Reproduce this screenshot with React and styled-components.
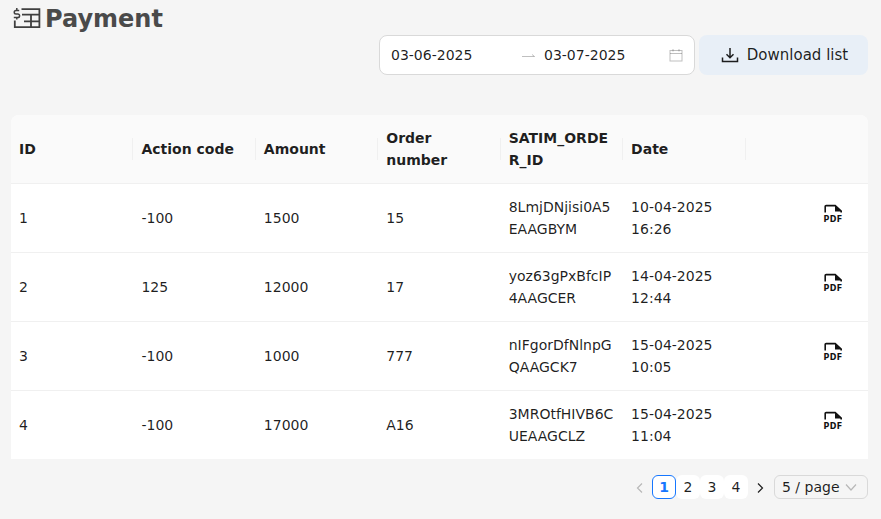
import React from "react";
import styled, { createGlobalStyle } from "styled-components";

const Global = createGlobalStyle`
  html, body { margin: 0; padding: 0; background: #f5f5f5; }
  body { font-family: "DejaVu Sans", sans-serif; font-size: 14px; color: rgba(0,0,0,0.88); }
`;

const Page = styled.div`
  width: 881px; height: 519px; box-sizing: border-box; padding: 0 13px 0 11px; overflow: hidden;
`;
const TitleRow = styled.div`
  display: flex; align-items: center; gap: 4px; height: 35px; padding: 2px 0 0 2px; box-sizing: border-box;
`;
const Title = styled.h1`
  margin: 0; font-size: 24px; line-height: 36px; font-weight: 700; color: #4a4a4a;
`;
const Toolbar = styled.div`
  display: flex; justify-content: flex-end; gap: 4px; height: 40px; margin-bottom: 40px;
`;
const RangePicker = styled.div`
  display: flex; align-items: center; width: 316px; box-sizing: border-box; padding: 0 11px;
  background: #fff; border: 1px solid #d9d9d9; border-radius: 8px;
`;
const DateValue = styled.span`
  width: ${(p) => (p.$end ? "125px" : "131px")}; flex: none; line-height: 22px;
`;
const RangeArrow = styled.span`
  width: 22px; flex: none; display: flex; justify-content: flex-start;
  color: rgba(0,0,0,0.25);
`;
const CalendarSlot = styled.span`
  margin-left: auto; margin-right: 4px; display: flex; color: rgba(0,0,0,0.25);
`;
const DownloadButton = styled.button`
  display: flex; align-items: center; justify-content: center; gap: 8px; width: 169px; padding: 0 0 0 2px;
  border: 0; border-radius: 8px; background: #e8eff7; color: rgba(0,0,0,0.88);
  font: inherit; font-size: 15px; cursor: pointer;
`;
const Table = styled.table`
  width: 857px; table-layout: fixed; border-collapse: separate; border-spacing: 0;
  background: #fff; border-radius: 8px 8px 0 0;
`;
const Head = styled.th`
  position: relative; height: 69px; box-sizing: border-box; padding: 0 8px; text-align: left;
  background: #fafafa; font-weight: 700; line-height: 22px; border-bottom: 1px solid #f0f0f0;
  overflow-wrap: anywhere; color: rgba(0,0,0,0.88);
  &:first-child { border-top-left-radius: 8px; }
  &:last-child { border-top-right-radius: 8px; }
  &:not(:last-child)::before {
    content: ""; position: absolute; top: 50%; right: 0; width: 1px; height: 22px;
    transform: translateY(-50%); background: #f0f0f0;
  }
`;
const Cell = styled.td`
  height: 69px; box-sizing: border-box; padding: 0 8px; line-height: 22px;
  border-bottom: 1px solid #f0f0f0; overflow-wrap: anywhere;
  ${(p) => p.$last && "border-bottom: 0; height: 68px;"}
  ${(p) => p.$icon && "text-align: right; padding-right: 24px;"}
`;
const PdfIcon = styled.svg`
  display: inline-block; vertical-align: middle; width: 22px; height: 22px; margin-bottom: 6px;
`;
const Pager = styled.nav`
  display: flex; justify-content: flex-end; align-items: center; margin-top: 16px; height: 24px;
`;
const PageItem = styled.span`
  width: 24px; height: 24px; box-sizing: border-box; display: flex; align-items: center; justify-content: center;
  border-radius: 6px; line-height: 22px;
  background: ${(p) => (p.$plain ? "transparent" : "#fff")};
  border: 1px solid ${(p) => (p.$active ? "#1677ff" : "transparent")};
  color: ${(p) => (p.$active ? "#1677ff" : p.$disabled ? "rgba(0,0,0,0.25)" : "rgba(0,0,0,0.88)")};
  font-weight: ${(p) => (p.$active ? 700 : 400)};
`;
const PageSize = styled.div`
  display: flex; align-items: center; justify-content: space-between; width: 94px; height: 24px;
  margin-left: 2px; padding: 0 10px 0 7px; box-sizing: border-box;
  background: #f5f5f5; border: 1px solid #d9d9d9; border-radius: 6px;
`;
const Chevron = styled.svg`
  width: 12px; height: 12px; fill: none; stroke: currentColor; stroke-width: 1.2;
`;

const rows = [
  ["1", "-100", "1500", "15", "8LmjDNjisi0A5EAAGBYM", "10-04-2025 16:26"],
  ["2", "125", "12000", "17", "yoz63gPxBfcIP4AAGCER", "14-04-2025 12:44"],
  ["3", "-100", "1000", "777", "nIFgorDfNlnpGQAAGCK7", "15-04-2025 10:05"],
  ["4", "-100", "17000", "A16", "3MROtfHIVB6CUEAAGCLZ", "15-04-2025 11:04"],
];
const heads = ["ID", "Action code", "Amount", "Order number", "SATIM_ORDER_ID", "Date", ""];

const Pdf = () => (
  <PdfIcon viewBox="0 0 22 22" aria-hidden="true">
    <path d="M3.2 8.6V2.6a1 1 0 0 1 1-1h9l6 5.6v1.4" fill="none" stroke="#111" strokeWidth="1.6" />
    <path d="M13 1.6v5.8h6.2z" fill="#111" />
    <text x="11" y="17.6" textAnchor="middle" fontFamily="'DejaVu Sans', sans-serif" fontWeight="700" fontSize="8" letterSpacing="0.4" fill="#111">PDF</text>
  </PdfIcon>
);

export default function App() {
  return (
    <Page>
      <Global />
      <TitleRow>
        <svg width="28" height="22" viewBox="0 1 28 22" fill="none" stroke="#404040" strokeWidth="1.8" aria-hidden="true">
          <path d="M1.8 13.5v6.6h24.6V2.2H8.5M9 7.7h17.4M11 14.4h15.4M18 7.7v12.4" />
          <path d="M6.2 3.4H3a1.5 1.5 0 0 0 0 3.5h1.8a1.6 1.6 0 0 1 0 3.6H.8M3.8 1v2M3.8 10.5v2" strokeWidth="1.5" />
        </svg>
        <Title>Payment</Title>
      </TitleRow>
      <Toolbar>
        <RangePicker>
          <DateValue>03-06-2025</DateValue>
          <RangeArrow>
            <svg width="13" height="8" viewBox="0 0 13 8" fill="none" stroke="currentColor" strokeWidth="1">
              <path d="M0 5.5h12.5L10 3.5" />
            </svg>
          </RangeArrow>
          <DateValue $end>03-07-2025</DateValue>
          <CalendarSlot>
            <svg width="14" height="14" viewBox="0 0 14 14" fill="none" stroke="currentColor" strokeWidth="1">
              <rect x="1" y="2.5" width="12" height="10.5" />
              <path d="M1 5.5h12M4 1v2.5M10 1v2.5" />
            </svg>
          </CalendarSlot>
        </RangePicker>
        <DownloadButton>
          <svg width="18" height="18" viewBox="0 0 18 18" fill="none" stroke="currentColor" strokeWidth="1.5" aria-hidden="true">
            <path d="M9 2v9.5M5.5 8.2 9 11.7l3.5-3.5M1.5 11.5v4h15v-4" />
          </svg>
          Download list
        </DownloadButton>
      </Toolbar>
      <Table>
        <thead>
          <tr>{heads.map((h, i) => <Head key={i}>{h}</Head>)}</tr>
        </thead>
        <tbody>
          {rows.map((r, i) => (
            <tr key={r[0]}>
              {r.map((c, j) => <Cell key={j} $last={i === rows.length - 1}>{c}</Cell>)}
              <Cell $icon $last={i === rows.length - 1}><Pdf /></Cell>
            </tr>
          ))}
        </tbody>
      </Table>
      <Pager>
        <PageItem $plain $disabled>
          <Chevron viewBox="0 -1 12 12"><path d="M8 1.5 3.5 6 8 10.5" /></Chevron>
        </PageItem>
        <PageItem $active>1</PageItem>
        <PageItem>2</PageItem>
        <PageItem>3</PageItem>
        <PageItem>4</PageItem>
        <PageItem $plain>
          <Chevron viewBox="0 -1 12 12"><path d="M4 1.5 8.5 6 4 10.5" /></Chevron>
        </PageItem>
        <PageSize>
          5 / page
          <Chevron viewBox="0 0 12 12" style={{ color: "rgba(0,0,0,0.25)" }}><path d="M1 3.5 6 9l5-5.5" /></Chevron>
        </PageSize>
      </Pager>
    </Page>
  );
}
